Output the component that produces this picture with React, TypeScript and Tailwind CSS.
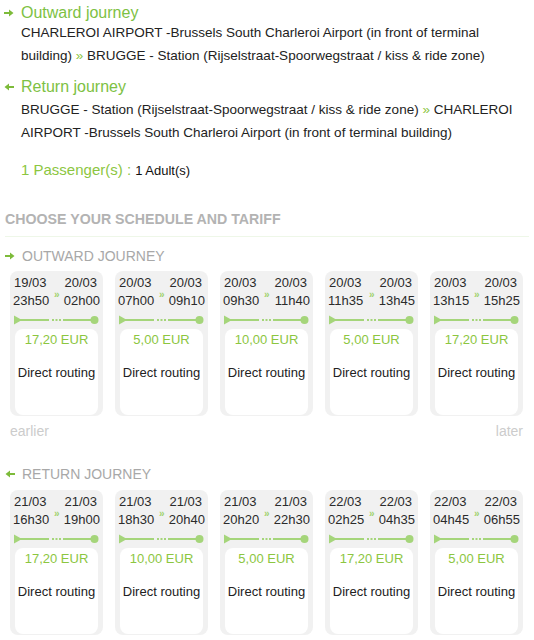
import React from "react";

type Trip = { d1: string; t1: string; d2: string; t2: string; price: string };

const outward: Trip[] = [
  { d1: "19/03", t1: "23h50", d2: "20/03", t2: "02h00", price: "17,20 EUR" },
  { d1: "20/03", t1: "07h00", d2: "20/03", t2: "09h10", price: "5,00 EUR" },
  { d1: "20/03", t1: "09h30", d2: "20/03", t2: "11h40", price: "10,00 EUR" },
  { d1: "20/03", t1: "11h35", d2: "20/03", t2: "13h45", price: "5,00 EUR" },
  { d1: "20/03", t1: "13h15", d2: "20/03", t2: "15h25", price: "17,20 EUR" },
];

const back: Trip[] = [
  { d1: "21/03", t1: "16h30", d2: "21/03", t2: "19h00", price: "17,20 EUR" },
  { d1: "21/03", t1: "18h30", d2: "21/03", t2: "20h40", price: "10,00 EUR" },
  { d1: "21/03", t1: "20h20", d2: "21/03", t2: "22h30", price: "5,00 EUR" },
  { d1: "22/03", t1: "02h25", d2: "22/03", t2: "04h35", price: "17,20 EUR" },
  { d1: "22/03", t1: "04h45", d2: "22/03", t2: "06h55", price: "5,00 EUR" },
];

function Arrow({ left = false }: { left?: boolean }) {
  return (
    <svg width="10" height="8" viewBox="0 0 10 8" className={left ? "rotate-180" : ""}>
      <path d="M0 3h5V0.5L9.5 4L5 7.5V5H0z" fill="#7dbb3a" />
    </svg>
  );
}

function Track() {
  return (
    <svg width="85" height="10" viewBox="0 0 85 10" className="block">
      <path d="M0 0.5L8 5L0 9.5z" fill="#a5d57a" />
      <line x1="6" y1="5" x2="35" y2="5" stroke="#a5d57a" strokeWidth="2" />
      <line x1="38" y1="5" x2="47" y2="5" stroke="#a5d57a" strokeWidth="2" strokeDasharray="2 1.5" />
      <line x1="49" y1="5" x2="80" y2="5" stroke="#a5d57a" strokeWidth="2" />
      <circle cx="80.5" cy="5" r="4" fill="#a5d57a" />
    </svg>
  );
}

function Card({ t }: { t: Trip }) {
  return (
    <div className="h-[145px] w-[93px] rounded-[8px] bg-[#f1f1f1] px-[3px] pt-[3px]">
      <div className="flex justify-between pl-[1px] pr-[3px] text-[13px] leading-[18px] text-[#2b2b2b]">
        <span>{t.d1}</span>
        <span>{t.d2}</span>
      </div>
      <div className="relative flex justify-between text-[13px] leading-[18px] text-[#2b2b2b]">
        <span>{t.t1}</span>
        <span className="absolute left-[41px] top-[-6px] text-[10px] font-bold text-[#9fd26e]">»</span>
        <span>{t.t2}</span>
      </div>
      <div className="mt-[5px] pl-[1px]">
        <Track />
      </div>
      <div className="mx-[2px] mt-[4px] h-[86px] rounded-[8px] bg-white text-center">
        <div className="pt-[2px] text-[13px] leading-[18px] text-[#8cc63f]">{t.price}</div>
        <div className="mt-[15px] text-[13px] leading-[18px] text-[#222]">Direct routing</div>
      </div>
    </div>
  );
}

export default function App() {
  return (
    <div className="w-[534px] bg-white font-['Liberation_Sans',Arial,sans-serif]">
      <div className="pt-[2px]">
        <div className="flex items-center gap-[7px] pl-[4px] text-[16px] leading-[22px] text-[#7dc143]">
          <Arrow />
          <span>Outward journey</span>
        </div>
        <p className="mt-[-3px] pl-[21px] pr-[4px] text-[13.5px] leading-[23px] text-[#222]">
          CHARLEROI AIRPORT -Brussels South Charleroi Airport (in front of terminal building){" "}
          <span className="text-[#8cc63f]">»</span> BRUGGE - Station (Rijselstraat-Spoorwegstraat / kiss &amp; ride
          zone)
        </p>
        <div className="mt-[9px] flex items-center gap-[7px] pl-[4px] text-[16px] leading-[22px] text-[#7dc143]">
          <Arrow left />
          <span>Return journey</span>
        </div>
        <p className="pl-[21px] pr-[4px] text-[13.5px] leading-[23px] text-[#222]">
          BRUGGE - Station (Rijselstraat-Spoorwegstraat / kiss &amp; ride zone){" "}
          <span className="text-[#8cc63f]">»</span> CHARLEROI AIRPORT -Brussels South Charleroi Airport (in front of
          terminal building)
        </p>
        <div className="mt-[15px] pl-[21px] leading-[22px]">
          <span className="text-[15px] text-[#8cc63f]">1 Passenger(s) : </span>
          <span className="text-[13px] text-[#111]">1 Adult(s)</span>
        </div>
        <div className="mt-[26px] pl-[5px] text-[14.2px] font-bold leading-[22px] text-[#b3b3b3]">
          CHOOSE YOUR SCHEDULE AND TARIFF
        </div>
        <div className="mx-[5px] mt-[6px] h-px bg-[#eef7e8]" />
        <div className="mt-[9px] flex items-center gap-[7px] pl-[5px] text-[14px] leading-[20px] text-[#a8a8a8]">
          <Arrow />
          <span>OUTWARD JOURNEY</span>
        </div>
        <div className="mt-[5px] flex gap-[12px] pl-[10px]">
          {outward.map((t, i) => (
            <Card key={i} t={t} />
          ))}
        </div>
        <div className="mt-[6px] flex justify-between pl-[10px] pr-[11px] text-[14px] leading-[18px] text-[#cccccc]">
          <span>earlier</span>
          <span>later</span>
        </div>
        <div className="mt-[24px] flex items-center gap-[7px] pl-[5px] text-[14px] leading-[20px] text-[#a8a8a8]">
          <Arrow left />
          <span>RETURN JOURNEY</span>
        </div>
        <div className="mt-[6px] flex gap-[12px] pl-[10px]">
          {back.map((t, i) => (
            <Card key={i} t={t} />
          ))}
        </div>
      </div>
    </div>
  );
}
